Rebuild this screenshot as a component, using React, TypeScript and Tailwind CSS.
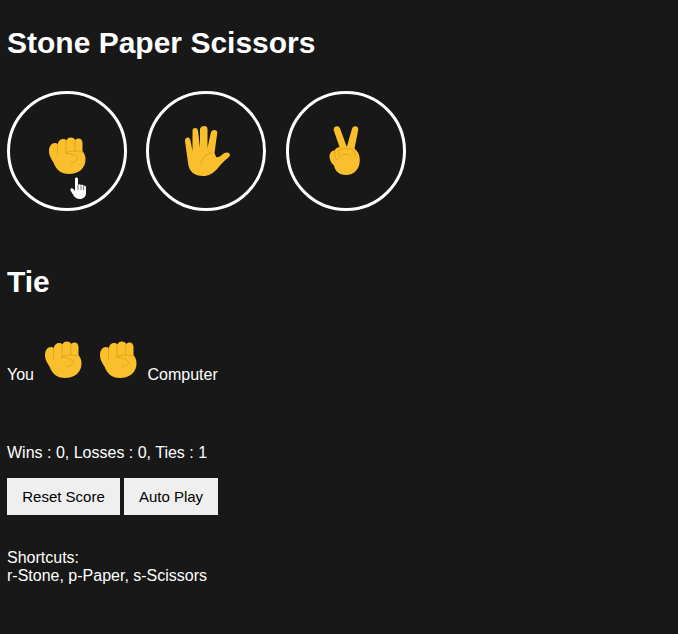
const Fist = ({ className }: { className: string }) => (
  <svg viewBox="0 0 38 38" className={className}>
    <path
      d="M1 14C1 9.500 3.500 6 7 6c1 0 2 .4 2.800 1C10.500 3.500 12.500 2 15 2c1.500 0 2.600.5 3.400 1.400C19.500 1.200 21 .5 23 .5c2 0 3.500 1 4.300 2.500.7-1 2-1.500 3.200-1.500 2.500 0 4 2 4 4.500v8c2 2.500 3 5 3 8.500 0 9-7 14.500-16.500 14.500-8 0-13-4.500-15.500-11.500C3.500 22 1 19 1 14z"
      fill="#fabf2d"
    />
    <path
      d="M9.500 8v10M18 4v11M26.800 3.500V14M34 15c-5-1.500-12-1.500-17 1 4 .5 10 1.500 12 4 1.800 2.500-1 5-6 6"
      fill="none"
      stroke="#e5a00d"
      strokeWidth="0.9"
      strokeLinecap="round"
    />
  </svg>
);

const Hand = ({ className }: { className: string }) => (
  <svg viewBox="0 0 42 50" preserveAspectRatio="none" className={className}>
    <path
      d="M0 15c0-2 1-3.500 2.500-3.500S5 13 5.200 15L7 25V5c0-2 1-3 2.500-3s2.500 1 2.700 3L14 22V3c.5-2 2-3 4-3s3 1 3 3v19l3-15c.5-2 1.500-3 3.500-3 2 .3 3 1.500 2.500 4l-2.500 19 1.500 4c2 1 4-1 7-3.500 2-1.500 4.500-1.500 5.500 0s0 3.500-1.500 4.500c-4 3-7 7-10 11-4 4.500-8 7-13 7-8 0-13-4-14-12z"
      fill="#fabf2d"
    />
    <path
      d="M15 38c0-5 3-9 9-11"
      fill="none"
      stroke="#e5a00d"
      strokeWidth="0.9"
      strokeLinecap="round"
    />
  </svg>
);

const Peace = ({ className }: { className: string }) => (
  <svg viewBox="0 0 31 49" className={className}>
    <path
      d="M5 5C4 2.500 5.500.5 7.500.3c2-.2 3.200 1 3.800 2.700l6.500 18L23 2.700C23.500.9 25 0 26.800.3c2 .4 2.800 2.200 2.300 4.400l-3.600 17.800c3.300 2.500 5.300 6.500 5.300 11.500 0 9-5.800 15-13.800 15-7 0-11-4-12-9.500C2 37 .3 33 .5 29.500c.3-3 2.500-5 5-5 1-2 2.500-3 5-3.500z"
      fill="#fabf2d"
    />
    <path
      d="M6 25c-1 3 0 7 3 9M11 22c-2 3-2 7 1 10M11 24c4-2 10-2 13 0 2 2 3 4 2 7M13 29c3-1 7-1 9 1"
      fill="none"
      stroke="#e5a00d"
      strokeWidth="0.9"
      strokeLinecap="round"
    />
  </svg>
);

const Pointer = () => (
  <svg viewBox="0 0 17 22" className="absolute left-[60px] top-[83px] h-[22px] w-[17px]">
    <path
      d="M5 2c0-2 3-2 3 0v6c1-1 2.500-1 3 .3 1-.8 2.300-.5 2.600.7 1-.5 2.400 0 2.400 1.300V16c0 3.500-2.500 6-6 6-3.500 0-5.500-1.700-7-4.500L.5 13.500c-.8-1.700 1.500-3 2.800-1.500L5 14z"
      fill="#fff"
    />
    <path d="M8 8v5M11 8.500V13M13.600 9.300V13" fill="none" stroke="#333" strokeWidth="0.7" />
  </svg>
);

export default function App() {
  return (
    <div className="min-h-screen bg-[#181818] font-['Liberation_Sans',Arial,sans-serif] text-base text-white">
      <div className="p-[7px] pt-0">
        <h1 className="pt-[26px] text-[30px] leading-[34px] font-bold">Stone Paper Scissors</h1>

        {/* Moves */}
        <div className="mt-[31px] flex gap-[19px]">
          <button className="relative flex h-[120px] w-[120px] items-center justify-center rounded-full border-[3px] border-white pt-[10px]">
            <Fist className="h-[38px] w-[38px]" />
            <Pointer />
          </button>
          <button className="flex h-[120px] w-[120px] items-center justify-center rounded-full border-[3px] border-white pl-[3px]">
            <Hand className="h-[50px] w-[45px]" />
          </button>
          <button className="ml-px flex h-[120px] w-[120px] items-center justify-center rounded-full border-[3px] border-white pr-[3px] pb-[2px]">
            <Peace className="h-[49px] w-[31px]" />
          </button>
        </div>

        <h2 className="mt-[53px] text-[30px] leading-9 font-bold">Tie</h2>

        <div className="mt-[41px] flex items-end">
          <span className="pb-[1px] leading-[18px]">You</span>
          <Fist className="mb-[6px] ml-[10px] h-[38px] w-[38px]" />
          <Fist className="mb-[6px] ml-[17px] h-[38px] w-[38px]" />
          <span className="ml-[10.5px] pb-[1px] leading-[18px]">Computer</span>
        </div>

        <p className="mt-[59px] leading-[18px]">Wins : 0, Losses : 0, Ties : 1</p>

        <div className="mt-[16px] flex gap-1">
          <button className="h-[37px] w-[113px] bg-[#efefef] pt-px text-[15px] text-black">Reset Score</button>
          <button className="h-[37px] w-[94px] bg-[#efefef] pt-px text-[15px] text-black">Auto Play</button>
        </div>

        <p className="mt-[34px] leading-[18px]">
          Shortcuts:
          <br />
          r-Stone, p-Paper, s-Scissors
        </p>
      </div>
    </div>
  );
}
